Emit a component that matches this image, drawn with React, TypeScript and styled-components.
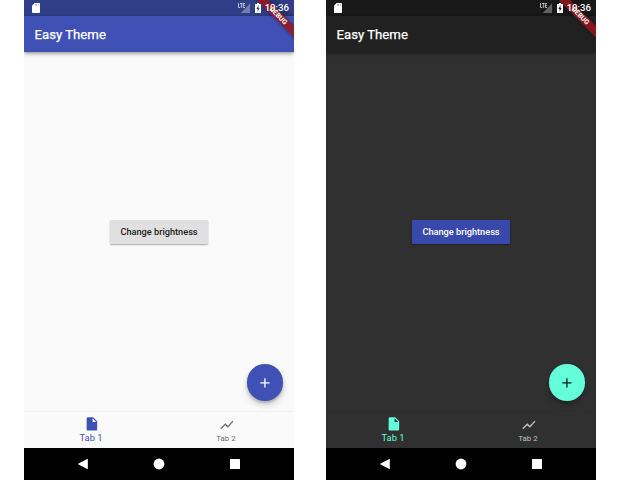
import React from "react";
import styled, { createGlobalStyle, ThemeProvider } from "styled-components";

interface PhoneTheme {
  status: string;
  bar: string;
  barShadow: string;
  body: string;
  button: string;
  buttonText: string;
  fab: string;
  fabIcon: string;
  active: string;
  inactive: string;
  tabShadow: string;
}

const light: PhoneTheme = {
  status: "#303e88",
  bar: "#3f51b5",
  barShadow: "0 1px 3px rgba(0,0,0,.3), 0 2px 5px rgba(0,0,0,.18)",
  body: "#fafafa",
  button: "#e0e0e0",
  buttonText: "#1c1c1c",
  fab: "#3f51b5",
  fabIcon: "#ffffff",
  active: "#3f51b5",
  inactive: "#6e6e6e",
  tabShadow: "0 -1px 1px rgba(0,0,0,.04)",
};

const dark: PhoneTheme = {
  status: "#191919",
  bar: "#212121",
  barShadow: "0 1px 3px rgba(0,0,0,.28), 0 2px 5px rgba(0,0,0,.18)",
  body: "#303030",
  button: "#3949ab",
  buttonText: "#ffffff",
  fab: "#64ffda",
  fabIcon: "#101c19",
  active: "#64ffda",
  inactive: "#c4c4c4",
  tabShadow: "0 -1px 1px rgba(0,0,0,.04)",
};

const GlobalStyle = createGlobalStyle`
  * { box-sizing: border-box; }
  body { margin: 0; background: #fff; font-family: Roboto, sans-serif; }
  svg { display: block; }
`;

const Page = styled.main`
  display: flex;
  gap: 32px;
  width: 620px;
  height: 480px;
  padding-left: 24px;
  overflow: hidden;
`;

const Phone = styled.section<{ theme: PhoneTheme }>`
  position: relative;
  display: flex;
  flex-direction: column;
  flex: none;
  width: 270px;
  height: 480px;
  overflow: hidden;
  background: ${(p) => p.theme.body};
`;

const StatusBar = styled.header<{ theme: PhoneTheme }>`
  display: flex;
  align-items: center;
  flex: none;
  height: 16px;
  padding: 0 5px 0 8px;
  color: #fff;
  background: ${(p) => p.theme.status};
`;

const StatusIcons = styled.div`
  position: relative;
  z-index: 3;
  display: flex;
  align-items: center;
  margin-left: auto;
`;

const Signal = styled.svg`
  margin-right: 5px;
`;

const Clock = styled.span`
  width: 24px;
  margin-left: 4px;
  font-size: 9.6px;
  font-weight: 500;
  line-height: 16px;
  display: flex;
  justify-content: flex-end;
  white-space: nowrap;
`;

const AppBar = styled.div<{ theme: PhoneTheme }>`
  display: flex;
  align-items: center;
  flex: none;
  height: 36.4px;
  padding-left: 10.5px;
  color: #fff;
  font-size: 13.2px;
  font-weight: 400;
  -webkit-text-stroke: 0.25px currentColor;
  background: ${(p) => p.theme.bar};
  box-shadow: ${(p) => p.theme.barShadow};
`;

const Content = styled.div`
  position: relative;
  display: flex;
  flex: 1;
  align-items: center;
  justify-content: center;
`;

const RaisedButton = styled.button<{ theme: PhoneTheme }>`
  height: 23.6px;
  width: 98.6px;
  padding: 0 0 1.2px;
  border: 0;
  border-radius: 1.3px;
  color: ${(p) => p.theme.buttonText};
  background: ${(p) => p.theme.button};
  font: 500 9.2px Roboto, sans-serif;
  white-space: nowrap;
  box-shadow: 0 1px 1.5px rgba(0, 0, 0, 0.24), 0 1px 2px rgba(0, 0, 0, 0.1);
`;

const Fab = styled.button<{ theme: PhoneTheme }>`
  position: absolute;
  right: 10.6px;
  bottom: 10.6px;
  display: flex;
  align-items: center;
  justify-content: center;
  width: 36.8px;
  height: 36.8px;
  padding: 0;
  border: 0;
  border-radius: 50%;
  color: ${(p) => p.theme.fabIcon};
  background: ${(p) => p.theme.fab};
  box-shadow: 0 2px 3px rgba(0, 0, 0, 0.2), 0 4px 7px rgba(0, 0, 0, 0.16);
`;

const TabBar = styled.nav<{ theme: PhoneTheme }>`
  display: flex;
  flex: none;
  height: 36.6px;
  background: ${(p) => p.theme.body};
  box-shadow: ${(p) => p.theme.tabShadow};
`;

const Tab = styled.div<{ $active?: boolean; theme: PhoneTheme }>`
  display: flex;
  flex: 1;
  flex-direction: column;
  align-items: center;
  padding-top: ${(p) => (p.$active ? 4.4 : 5.4)}px;
  color: ${(p) => (p.$active ? p.theme.active : p.theme.inactive)};
  font-size: ${(p) => (p.$active ? 9.4 : 7.9)}px;
  line-height: 11px;
`;

const TabLabel = styled.span`
  margin-right: 1px;
  white-space: nowrap;
`;

const NavBar = styled.footer`
  display: flex;
  flex: none;
  align-items: center;
  justify-content: center;
  gap: 64px;
  height: 31.6px;
  color: #fff;
  background: #000;
`;

const BannerClip = styled.div`
  position: absolute;
  top: 0;
  right: 0;
  z-index: 2;
  width: 44px;
  height: 44px;
  overflow: hidden;
`;

const BannerScrim = styled.div`
  position: absolute;
  inset: 0 0 auto 0;
  height: 16px;
  background: rgba(0, 0, 0, 0.12);
  clip-path: polygon(18px 0, 29px 0, 100% 15px, 100% 16px, 34px 16px);
`;

const Banner = styled.div`
  position: absolute;
  left: 2px;
  top: 11.9px;
  width: 52.6px;
  height: 7.9px;
  color: #fff;
  background: rgba(150, 22, 25, 0.84);
  box-shadow: 0 0 4px rgba(0, 0, 0, 0.35);
  font-size: 6.8px;
  font-weight: 700;
  line-height: 8px;
  text-align: center;
  transform: rotate(45deg);
`;

const Icon = ({ path, size }: { path: string; size: number }) => (
  <svg width={size} height={size} viewBox="0 0 24 24" fill="currentColor">
    <path d={path} />
  </svg>
);

const FILE =
  "M6 2c-1.1 0-1.99.9-1.99 2L4 20c0 1.1.89 2 1.99 2H18c1.1 0 2-.9 2-2V8l-6-6H6zm7 7V3.5L18.5 9H13z";
const CHART =
  "M3.5 18.49l6-6 4 4L22 6.92l-1.41-1.41-7.09 7.97-4-4L2 16.99z";
const ADD = "M19 13h-6v6h-2v-6H5v-2h6V5h2v6h6v2z";

function Screen({ theme }: { theme: PhoneTheme }) {
  return (
    <ThemeProvider theme={theme}>
      <Phone>
        <StatusBar>
          <svg width="8" height="10" viewBox="0 0 8 10" fill="#fff">
            <path
              fillRule="evenodd"
              d="M2.6 0H7.2Q8 0 8 .8V9.2Q8 10 7.2 10H.8Q0 10 0 9.2V2.7ZM2.9 1.4V2.6H3.5V1.4ZM4.4 1.4V2.6H5V1.4ZM5.9 1.4V2.6H6.5V1.4Z"
            />
          </svg>
          <StatusIcons>
            <Signal width="12" height="10" viewBox="0 0 12 10">
              <path d="M12 .5V10H2.8Z" fill="#fff" opacity=".32" />
              <path
                d="M.5 0V4.5H2M2 .5H4.6M3.3 .5V5M7 .5H5.3V4.5H7M5.3 2.5H6.7"
                fill="none"
                stroke="#fff"
                strokeWidth=".8"
                opacity=".85"
              />
            </Signal>
            <svg width="6" height="10" viewBox="0 0 6 10" fill="#fff">
              <path
                fillRule="evenodd"
                d="M2 0H4V1H5.4Q6 1 6 1.6V9.4Q6 10 5.4 10H.6Q0 10 0 9.4V1.6Q0 1 .6 1H2ZM3.5 2.3 1.4 6H2.6V8.7L4.6 5H3.5Z"
              />
            </svg>
            <Clock>10:36</Clock>
          </StatusIcons>
        </StatusBar>
        <AppBar>Easy Theme</AppBar>
        <Content>
          <RaisedButton>Change brightness</RaisedButton>
          <Fab aria-label="Add">
            <Icon path={ADD} size={15.8} />
          </Fab>
        </Content>
        <TabBar>
          <Tab $active>
            <Icon path={FILE} size={15.8} />
            <TabLabel>Tab 1</TabLabel>
          </Tab>
          <Tab>
            <Icon path={CHART} size={15.8} />
            <TabLabel>Tab 2</TabLabel>
          </Tab>
        </TabBar>
        <NavBar>
          <svg width="12" height="12" viewBox="0 0 12 12" fill="#fff">
            <path d="M10.8 .8V11.2L1.5 6.5Q1 6 1.5 5.5Z" />
          </svg>
          <svg width="12" height="12" viewBox="0 0 12 12" fill="#fff">
            <circle cx="6" cy="6" r="5.4" />
          </svg>
          <svg width="12" height="12" viewBox="0 0 12 12" fill="#fff">
            <rect x="1" y="1" width="10" height="10" rx=".5" />
          </svg>
        </NavBar>
        <BannerClip>
          <Banner>DEBUG</Banner>
          <BannerScrim />
        </BannerClip>
      </Phone>
    </ThemeProvider>
  );
}

export default function App() {
  return (
    <>
      <GlobalStyle />
      <Page>
        <Screen theme={light} />
        <Screen theme={dark} />
      </Page>
    </>
  );
}
